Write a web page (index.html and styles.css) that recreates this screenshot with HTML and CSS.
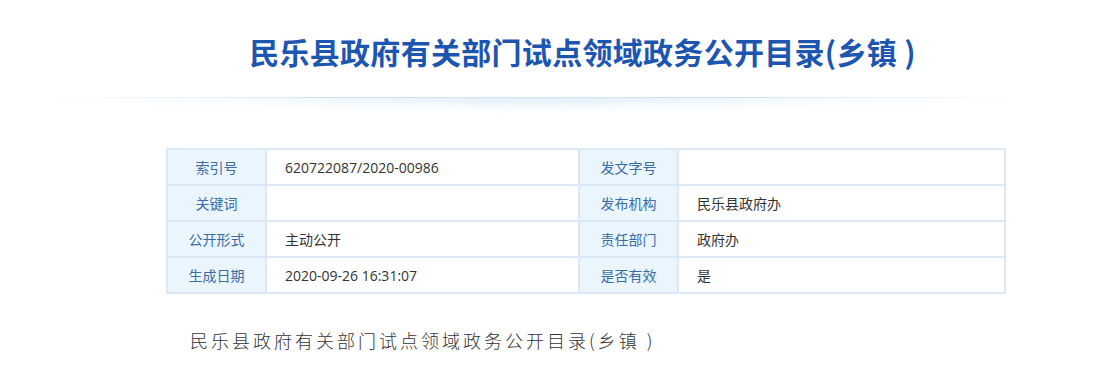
FILE: index.html
```html
<!DOCTYPE html>
<html lang="zh-CN">
<head>
<meta charset="utf-8">
<title>民乐县政府有关部门试点领域政务公开目录(乡镇 )</title>
<link rel="stylesheet" href="styles.css">
</head>
<body>
<div class="page">
  <header class="head">
    <h1 class="title">民乐县政府有关部门试点领域政务公开目录(乡镇 )</h1>
  </header>
  <div class="shade"></div>
  <div class="content">
    <table class="meta">
      <colgroup>
        <col class="c-label"><col class="c-val1"><col class="c-label"><col class="c-val2">
      </colgroup>
      <tr>
        <td class="label">索引号</td><td class="val">620722087/2020-00986</td>
        <td class="label">发文字号</td><td class="val"></td>
      </tr>
      <tr>
        <td class="label">关键词</td><td class="val"></td>
        <td class="label">发布机构</td><td class="val">民乐县政府办</td>
      </tr>
      <tr>
        <td class="label">公开形式</td><td class="val">主动公开</td>
        <td class="label">责任部门</td><td class="val">政府办</td>
      </tr>
      <tr>
        <td class="label">生成日期</td><td class="val">2020-09-26 16:31:07</td>
        <td class="label">是否有效</td><td class="val">是</td>
      </tr>
    </table>
    <p class="body-text">民乐县政府有关部门试点领域政务公开目录(乡镇 )</p>
  </div>
</div>
</body>
</html>
```
FILE: styles.css
```css
html, body {
  margin: 0;
  padding: 0;
  background: #fff;
}
body {
  font-family: "Noto Sans CJK SC", "Microsoft YaHei", sans-serif;
  width: 1094px;
  height: 368px;
  overflow: hidden;
}
.page {
  width: 1094px;
}
.head {
  width: 833px;
  margin-left: 166px;
  height: 97px;
  display: flex;
  justify-content: center;
  align-items: flex-start;
}
.title {
  margin: 34px 0 0;
  font-size: 30px;
  line-height: 34px;
  font-weight: 700;
  color: #1d56b0;
  letter-spacing: 0.3px;
  white-space: nowrap;
}
.shade {
  margin-left: 40px;
  width: 990px;
  height: 16px;
  background:
    radial-gradient(ellipse 50% 100% at 50% 0%, rgba(200, 225, 245, 0.55), rgba(230, 242, 252, 0.25) 60%, rgba(255,255,255,0) 100%);
  border-top: 1px solid transparent;
  border-image: linear-gradient(90deg, rgba(210,230,245,0), rgba(205,228,245,1) 30%, rgba(205,228,245,1) 70%, rgba(210,230,245,0)) 1;
}
.content {
  margin-left: 166px;
  width: 839px;
  padding-top: 34px;
}
.meta {
  width: 839px;
  table-layout: fixed;
  border-collapse: collapse;
  border: 2px solid #dbe9f7;
}
.c-label { width: 99px; }
.c-val1 { width: 313px; }
.c-val2 { width: 327px; }
.meta td {
  height: 34px;
  border: 2px solid #dbe9f7;
  font-size: 14px;
  padding: 0;
}
.label {
  background: #eaf5fe;
  color: #3a6ca6;
  text-align: center;
}
.val {
  color: #333;
  padding-left: 18px !important;
  font-family: "Open Sans", "Noto Sans CJK SC", sans-serif;
}
.body-text {
  margin: 34px 0 0 24px;
  font-size: 18px;
  line-height: 24px;
  letter-spacing: 3px;
  color: #333;
  font-weight: 300;
  font-family: "Noto Sans CJK SC", serif;
}
```
